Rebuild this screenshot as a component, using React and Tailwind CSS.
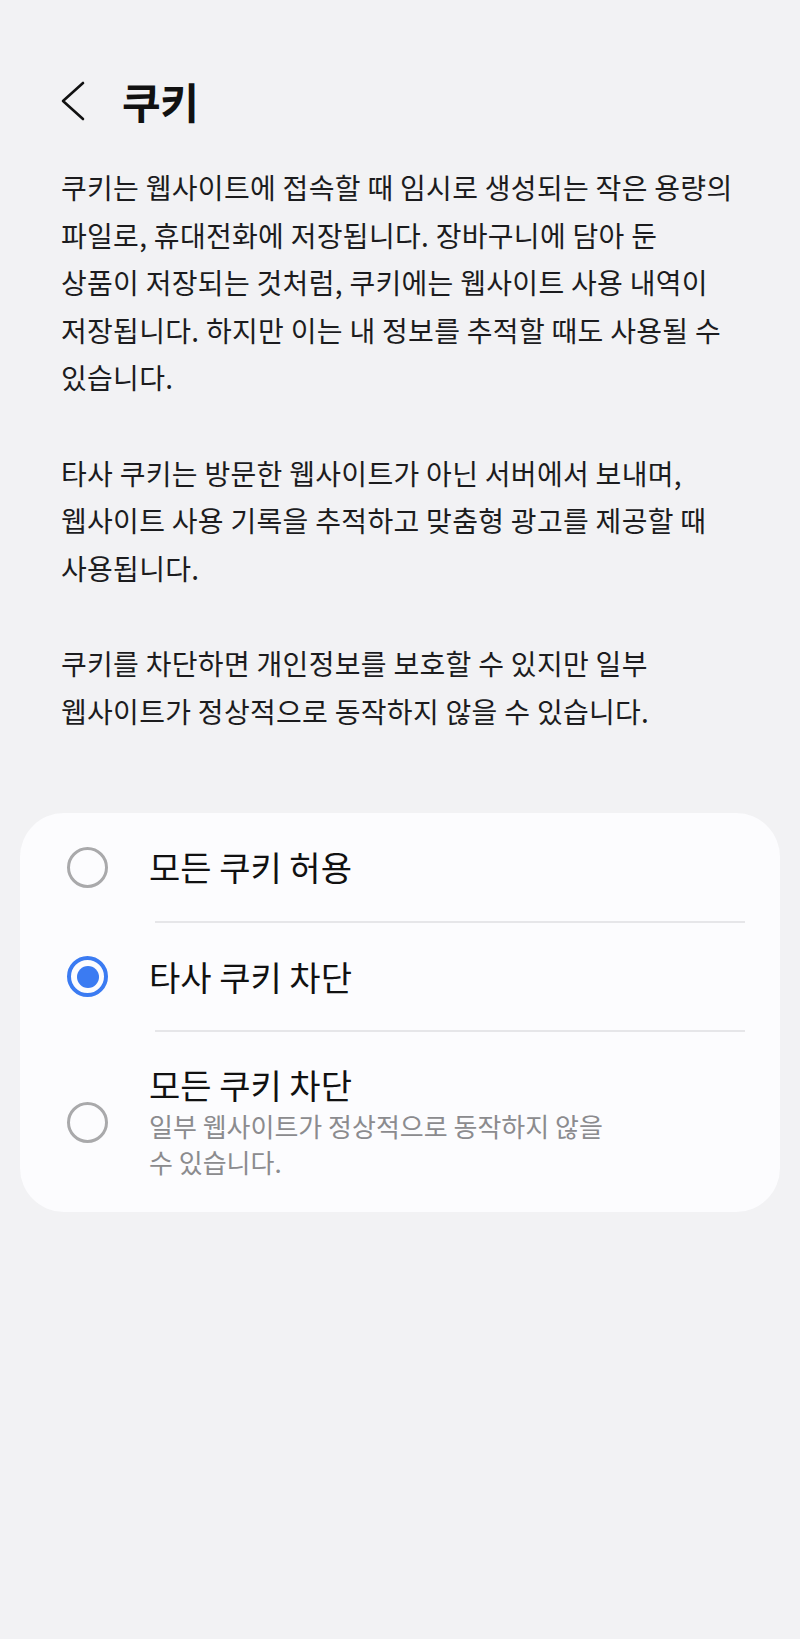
import React, { useState } from "react";

const FONT = { fontFamily: '"Noto Sans CJK KR", "Noto Sans", sans-serif' };

const Radio = ({ checked }) =>
  checked ? (
    <div className="w-[41px] h-[41px] rounded-full border-[4.5px] border-[#3b7bf2] flex items-center justify-center shrink-0">
      <div className="w-[22px] h-[22px] rounded-full bg-[#3b7bf2]" />
    </div>
  ) : (
    <div className="w-[41px] h-[41px] rounded-full border-[3px] border-[#a9a9ab] shrink-0" />
  );

const App = () => {
  const [choice, setChoice] = useState(1);

  const options = [
    { label: "모든 쿠키 허용" },
    { label: "타사 쿠키 차단" },
    { label: "모든 쿠키 차단", sub: ["일부 웹사이트가 정상적으로 동작하지 않을", "수 있습니다."] },
  ];

  const paragraphs = [
    [
      "쿠키는 웹사이트에 접속할 때 임시로 생성되는 작은 용량의",
      "파일로, 휴대전화에 저장됩니다. 장바구니에 담아 둔",
      "상품이 저장되는 것처럼, 쿠키에는 웹사이트 사용 내역이",
      "저장됩니다. 하지만 이는 내 정보를 추적할 때도 사용될 수",
      "있습니다.",
    ],
    [
      "타사 쿠키는 방문한 웹사이트가 아닌 서버에서 보내며,",
      "웹사이트 사용 기록을 추적하고 맞춤형 광고를 제공할 때",
      "사용됩니다.",
    ],
    [
      "쿠키를 차단하면 개인정보를 보호할 수 있지만 일부",
      "웹사이트가 정상적으로 동작하지 않을 수 있습니다.",
    ],
  ];

  return (
    <div className="min-h-screen bg-[#f2f2f4] pt-[79px] pb-10" style={FONT}>
      {/* header */}
      <div className="h-[44px] flex items-center pl-[60px]">
        <svg width="26" height="40" viewBox="0 0 26 40" fill="none" className="shrink-0">
          <polyline points="23,2 3,20 23,38" stroke="#111" strokeWidth="2.6" strokeLinecap="round" strokeLinejoin="round" />
        </svg>
        <h1 className="ml-[36px] text-[42px] font-bold text-[#111] leading-none tracking-[-0.5px]">쿠키</h1>
      </div>

      {/* description */}
      <div className="mt-[41px] pl-[61px] text-[28px] tracking-[0.3px] leading-[47.6px] text-[#1c1c1e] flex flex-col gap-[47.6px]">
        {paragraphs.map((lines, i) => (
          <p key={i}>
            {lines.map((l, j) => (
              <span key={j} className="block whitespace-nowrap">{l}</span>
            ))}
          </p>
        ))}
      </div>

      {/* options card */}
      <div className="mt-[78px] mx-[20px] rounded-[44px] bg-[#fcfcfe] overflow-hidden">
        {options.map((o, i) => (
          <div key={i}>
            {i > 0 && <div className="ml-[135px] mr-[35px] h-[2px] bg-[#e6e6e9]" />}
            <button
              onClick={() => setChoice(i)}
              className={`w-full flex items-center gap-[41px] pl-[47px] text-left ${
                o.sub ? "h-[180px]" : i === 0 ? "h-[108px]" : "h-[107px]"
              }`}
            >
              <Radio checked={choice === i} />
              <div className="flex flex-col">
                <span className="text-[34px] leading-[42px] text-[#111]">{o.label}</span>
                {o.sub && (
                  <span className="mt-[2px] text-[26px] leading-[36px] text-[#8b8b8e]">
                    {o.sub.map((s, k) => (
                      <span key={k} className="block whitespace-nowrap">{s}</span>
                    ))}
                  </span>
                )}
              </div>
            </button>
          </div>
        ))}
      </div>
    </div>
  );
};

export default App;
